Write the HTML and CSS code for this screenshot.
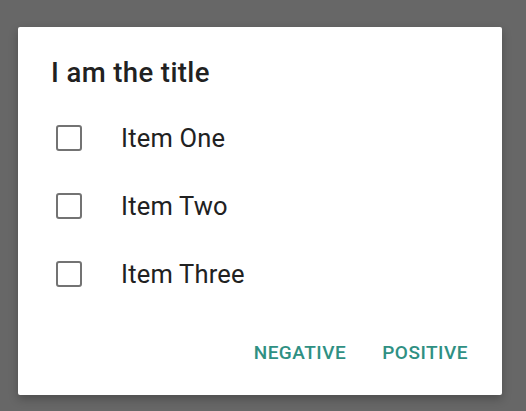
FILE: index.html
```html
<!DOCTYPE html>
<html>
<head>
<meta charset="utf-8">
<link rel="stylesheet" href="styles.css">
</head>
<body>
<div class="dialog">
  <div class="title">I am the title</div>
  <ul class="items">
    <li class="item"><span class="box"></span><span class="label">Item One</span></li>
    <li class="item"><span class="box"></span><span class="label">Item Two</span></li>
    <li class="item"><span class="box"></span><span class="label">Item Three</span></li>
  </ul>
  <div class="actions">
    <button class="btn">NEGATIVE</button>
    <button class="btn">POSITIVE</button>
  </div>
</div>
</body>
</html>
```
FILE: styles.css
```css
html, body {
  margin: 0;
  padding: 0;
}
body {
  width: 526px;
  height: 411px;
  background: #676767;
  font-family: Roboto, "Liberation Sans", sans-serif;
  overflow: hidden;
}
.dialog {
  margin: 27px 0 0 18px;
  width: 484px;
  height: 368px;
  box-sizing: border-box;
  background: #fff;
  border-radius: 2px;
  box-shadow: 0 4px 10px rgba(0,0,0,0.25);
  padding-top: 30px;
  display: flex;
  flex-direction: column;
}
.title {
  font-size: 27.5px;
  font-weight: 500;
  letter-spacing: 0.4px;
  line-height: 32px;
  color: #212121;
  padding-left: 33px;
}
.items {
  list-style: none;
  margin: 0;
  padding: 15px 0 0 38px;
}
.item {
  display: flex;
  align-items: center;
  height: 68px;
}
.box {
  width: 26px;
  height: 26px;
  box-sizing: border-box;
  border: 2.6px solid #737373;
  border-radius: 3px;
}
.label {
  margin-left: 39px;
  font-size: 25.5px;
  letter-spacing: 0.2px;
  color: #212121;
}
.actions {
  margin-top: auto;
  display: flex;
  justify-content: flex-end;
  gap: 36px;
  padding: 0 34px 30px 0;
}
.btn {
  border: 0;
  background: none;
  padding: 0;
  font-family: Roboto, "Liberation Sans", sans-serif;
  font-size: 19px;
  font-weight: 500;
  letter-spacing: 0.5px;
  color: #2f9083;
  line-height: 24px;
}
```
